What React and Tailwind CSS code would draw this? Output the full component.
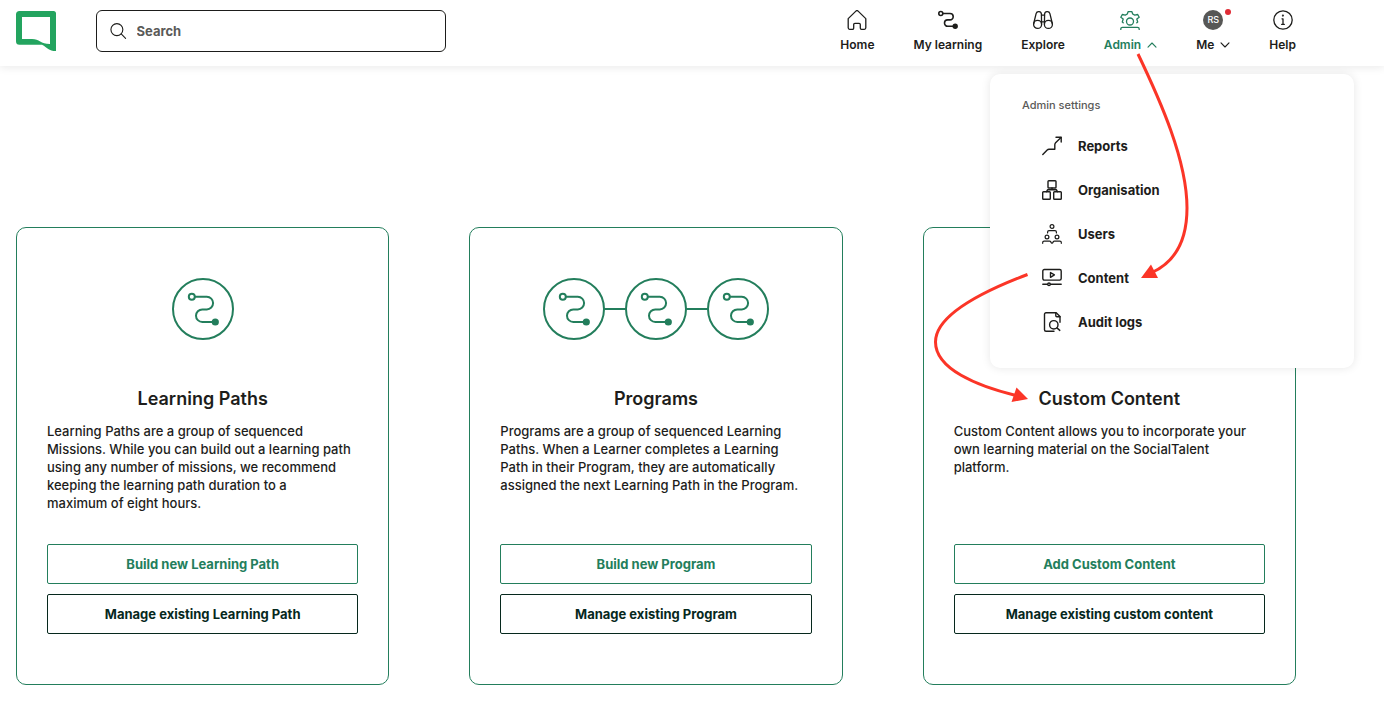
import { useState } from "react";

const iconProps = {
  fill: "none",
  stroke: "currentColor",
  strokeLinecap: "round",
  strokeLinejoin: "round",
  "aria-hidden": true,
};

function Logo() {
  return (
    <svg width="40" height="40" viewBox="0 0 40 40" aria-hidden="true">
      <path
        fill="#23a45f"
        fillRule="evenodd"
        d="M3.500 0H37.500A2.500 2.500 0 0 1 40 2.500V40C32.500 40 31.500 36.500 26 33.700H3.500A3.500 3.500 0 0 1 0 30.200V3.500A3.500 3.500 0 0 1 3.500 0ZM6 6V28H16C23.500 28 24.500 33 34 33V6Z"
      />
    </svg>
  );
}

function HomeIcon() {
  return (
    <svg width="20" height="20" viewBox="0 0 20 20" strokeWidth="1.300" {...iconProps}>
      <path d="M1.200 8.600 8.900 1.100a1.600 1.600 0 0 1 2.200 0L18.800 8.600V17.800a1.500 1.500 0 0 1-1.500 1.500H14.500a1.200 1.200 0 0 1-1.200-1.200V14.500a1.200 1.200 0 0 0-1.200-1.200H7.900A1.200 1.200 0 0 0 6.700 14.500v3.600a1.200 1.200 0 0 1-1.200 1.200H2.700A1.500 1.500 0 0 1 1.200 17.800Z" />
    </svg>
  );
}

function LearningIcon() {
  return (
    <svg width="20" height="20" viewBox="0 0 20 20" strokeWidth="1.600" {...iconProps}>
      <circle cx="2.800" cy="3.500" r="2" />
      <path d="M5 3.500h7a3.200 3.200 0 0 1 0 6.400H9.700a3.200 3.200 0 0 0 0 6.400H15" />
      <circle cx="17.200" cy="16.200" r="1.900" fill="currentColor" />
    </svg>
  );
}

function ExploreIcon() {
  return (
    <svg width="20" height="20" viewBox="0 0 20 20" strokeWidth="1.300" {...iconProps}>
      <circle cx="4.600" cy="14.400" r="4" />
      <circle cx="15.400" cy="14.400" r="4" />
      <path d="M.7 13.500 3.100 3.600a2.700 2.700 0 0 1 5.300.7L8.600 14" />
      <path d="M19.300 13.500 16.900 3.600a2.700 2.700 0 0 0-5.300.7L11.400 14" />
      <path d="M8.500 5.200h3M8.600 11.800h2.800" />
    </svg>
  );
}

function AdminIcon() {
  return (
    <svg width="20" height="20" viewBox="0 0 20 20" strokeWidth="1.300" {...iconProps}>
      <path d="M3.200 12.800 2.300 12l.9-3L.8 7.200 2.300 4.500l3 .6L7.300 4 8.200 1.600h3.600L12.700 4l2 1.100 3-.6 1.500 2.700L16.800 9l.9 3-.9.800" />
      <circle cx="10" cy="11.500" r="3.500" />
      <path d="M.8 19.400v-.4a1.700 1.700 0 0 1 1.700-1.700h15a1.700 1.700 0 0 1 1.700 1.700v.4" />
    </svg>
  );
}

function HelpIcon() {
  return (
    <svg width="20" height="20" viewBox="0 0 20 20" strokeWidth="1.300" {...iconProps}>
      <circle cx="10" cy="10" r="9.200" />
      <path d="M9 8.800h1v5.600M8.700 14.400h2.600" />
      <circle cx="9.900" cy="5.600" r=".4" fill="currentColor" />
    </svg>
  );
}

function Chevron({ up }) {
  return (
    <svg width="10" height="6" viewBox="0 0 10 6" strokeWidth="1.100" {...iconProps}>
      <path d={up ? "M1 5.200 5 1l4 4.200" : "M1 .8 5 5l4-4.200"} />
    </svg>
  );
}

function SearchIcon() {
  return (
    <svg width="18" height="18" viewBox="0 0 18 18" strokeWidth="1.200" {...iconProps}>
      <circle cx="7.500" cy="7.500" r="6.500" />
      <path d="m12.200 12.200 4.800 4.800" />
    </svg>
  );
}

function ReportsIcon() {
  return (
    <svg width="20" height="20" viewBox="0 0 20 20" strokeWidth="1.400" {...iconProps}>
      <path d="M.8 18.600 5.200 14a2.500 2.500 0 0 1 1.800-.8h5.800V8.700a3 3 0 0 1 .8-2L19 1.400" />
      <path d="M14 1.200h5.200V6" />
    </svg>
  );
}

function OrganisationIcon() {
  return (
    <svg width="20" height="20" viewBox="0 0 20 20" strokeWidth="1.400" {...iconProps}>
      <rect x="6" y=".7" width="8" height="7.300" rx=".8" />
      <rect x=".7" y="11.700" width="7.600" height="7.600" rx=".8" />
      <rect x="11.700" y="11.700" width="7.600" height="7.600" rx=".8" />
      <path d="M10 8v1.500M4.500 11.700l1.200-2h8.600l1.200 2" />
    </svg>
  );
}

function UsersIcon() {
  return (
    <svg width="20" height="20" viewBox="0 0 20 20" strokeWidth="1.200" {...iconProps}>
      <circle cx="10" cy="2.500" r="1.900" />
      <circle cx="5" cy="13" r="1.900" />
      <circle cx="15" cy="13" r="1.900" />
      <path d="M5.600 9V8a1.400 1.400 0 0 1 1.400-1.400h6A1.400 1.400 0 0 1 14.400 8v1" />
      <path d="M.7 19.300v-.8A1.400 1.400 0 0 1 2.100 17.100h5.500a1.400 1.400 0 0 1 1.400 1.400l1 .8 1-.8a1.400 1.400 0 0 1 1.400-1.400h5.500a1.400 1.400 0 0 1 1.400 1.400v.8" />
    </svg>
  );
}

function ContentIcon() {
  return (
    <svg width="20" height="20" viewBox="0 0 20 20" strokeWidth="1.400" {...iconProps}>
      <rect x=".8" y="1.500" width="18.400" height="10.600" rx="1.500" />
      <path d="M8.500 4.500v4.800l3.900-2.400Z" />
      <path d="M.8 16.300h4.700M8.500 16.300h10.700" />
      <circle cx="7" cy="16.300" r="1.300" />
    </svg>
  );
}

function AuditIcon() {
  return (
    <svg width="20" height="20" viewBox="0 0 20 20" strokeWidth="1.400" {...iconProps}>
      <path d="M12 19.300H4A1.500 1.500 0 0 1 2.500 17.800V2.200A1.500 1.500 0 0 1 4 .7h10.200l3.800 3.800v5.800" />
      <path d="M13.800.9v2.800a1 1 0 0 0 1 1H18" />
      <circle cx="11.800" cy="12.800" r="4.200" />
      <path d="m14.900 15.900 2.900 2.500" />
    </svg>
  );
}

// Circle with the route drawing, repeated and joined for programs
function PathBadge({ count = 1 }) {
  const width = 62 + (count - 1) * 82;
  return (
    <svg
      width={width}
      height="62"
      viewBox={`0 0 ${width} 62`}
      strokeWidth="2"
      className="text-[#237e5c]"
      {...iconProps}
    >
      {Array.from({ length: count }, (_, i) => (
        <g key={i} transform={`translate(${i * 82} 0)`}>
          {i > 0 && <path d="M-20 31H0" />}
          <circle cx="31" cy="31" r="30" />
          <circle cx="19.800" cy="18.800" r="3" />
          <path d="M23 18.800h11.800a6.300 6.300 0 0 1 0 12.600H30.300a6.300 6.300 0 0 0 0 12.600H43" />
          <circle cx="43.300" cy="44" r="2.600" fill="currentColor" />
        </g>
      ))}
    </svg>
  );
}

const adminLinks = [
  { label: "Reports", icon: ReportsIcon },
  { label: "Organisation", icon: OrganisationIcon },
  { label: "Users", icon: UsersIcon },
  { label: "Content", icon: ContentIcon },
  { label: "Audit logs", icon: AuditIcon },
];

const cards = [
  {
    title: "Learning Paths",
    text: "Learning Paths are a group of sequenced\nMissions. While you can build out a learning path\nusing any number of missions, we recommend\nkeeping the learning path duration to a\nmaximum of eight hours.",
    badges: 1,
    primary: "Build new Learning Path",
    secondary: "Manage existing Learning Path",
  },
  {
    title: "Programs",
    text: "Programs are a group of sequenced Learning\nPaths. When a Learner completes a Learning\nPath in their Program, they are automatically\nassigned the next Learning Path in the Program.",
    badges: 3,
    primary: "Build new Program",
    secondary: "Manage existing Program",
  },
  {
    title: "Custom Content",
    text: "Custom Content allows you to incorporate your\nown learning material on the SocialTalent\nplatform.",
    badges: 0,
    primary: "Add Custom Content",
    secondary: "Manage existing custom content",
  },
];

const navItem = "flex flex-col items-center gap-2 text-xs leading-[14px] font-semibold";

function Header({ menuOpen, onToggle }) {
  return (
    <header className="relative z-10 bg-white shadow-[0_2px_8px_rgba(0,0,0,0.08)]">
      <div className="flex h-[66px] max-w-[1312px] items-start justify-between px-4 pt-2.5">
        <div className="flex items-center gap-10">
          <a href="#" aria-label="Dashboard">
            <Logo />
          </a>
          <label className="flex h-[42px] w-[350px] items-center gap-2.5 rounded-md border border-[#1d1d1b] px-[13px]">
            <SearchIcon />
            <input
              type="search"
              aria-label="Search"
              placeholder="Search"
              className="w-full text-[13px] leading-5 font-bold outline-none placeholder:text-[#5a5a58]"
            />
          </label>
        </div>

        <nav className="flex gap-[39px]">
          <a href="#" className={navItem}>
            <HomeIcon />
            Home
          </a>
          <a href="#" className={navItem}>
            <LearningIcon />
            My learning
          </a>
          <a href="#" className={navItem}>
            <ExploreIcon />
            Explore
          </a>
          <button
            type="button"
            aria-expanded={menuOpen}
            onClick={onToggle}
            className={`${navItem} text-[#237e5c]`}
          >
            <AdminIcon />
            <span className="flex items-center gap-1.5">
              Admin <Chevron up={menuOpen} />
            </span>
          </button>
          <button type="button" className={navItem}>
            <span className="relative flex size-5 items-center justify-center rounded-full bg-[#575755] text-[9px] font-medium text-white">
              RS
              <span className="absolute -top-px -right-2 size-1.5 rounded-full bg-[#e02b35]" />
            </span>
            <span className="flex items-center gap-1.5">
              Me <Chevron />
            </span>
          </button>
          <a href="#" className={navItem}>
            <HelpIcon />
            Help
          </a>
        </nav>
      </div>

      {menuOpen && (
        <div className="absolute top-[74px] right-[30px] w-[364px] rounded-[10px] bg-white px-8 py-6 shadow-[0_0_10px_rgba(0,0,0,0.1)]">
          <p className="text-[11px] leading-[14px] font-medium text-[#5a5a58]">Admin settings</p>
          <ul className="mt-3 ml-5">
            {adminLinks.map(({ label, icon: Icon }) => (
              <li key={label}>
                <a href="#" className="flex h-11 items-center gap-4 text-[13px] leading-5 font-bold">
                  <Icon />
                  {label}
                </a>
              </li>
            ))}
          </ul>
        </div>
      )}
    </header>
  );
}

function ContentCard({ title, text, badges, primary, secondary }) {
  return (
    <section className="flex flex-col rounded-[10px] border border-[#237e5c] px-[30px] py-[50px]">
      <div className="flex h-[62px] justify-center">
        {badges > 0 && <PathBadge count={badges} />}
      </div>
      <h2 className="mt-12 text-center text-lg leading-[22px] font-semibold">{title}</h2>
      <p className="mt-3 mb-8 text-[13px] leading-[18px] font-medium whitespace-pre-line">{text}</p>
      <div className="mt-auto flex flex-col gap-2.5 text-[13px] leading-5 font-bold">
        <button type="button" className="h-10 rounded-xs border border-[#237e5c] text-[#237e5c]">
          {primary}
        </button>
        <button type="button" className="h-10 rounded-xs border border-[#06281d] text-[#06281d]">
          {secondary}
        </button>
      </div>
    </section>
  );
}

// Red guide arrows: Admin -> Content -> Custom Content
function GuideArrows() {
  return (
    <svg
      width="300"
      height="360"
      viewBox="910 50 300 360"
      className="pointer-events-none absolute top-[50px] left-[910px] z-20"
      fill="none"
      stroke="#fb3527"
      strokeWidth="3"
      aria-hidden="true"
    >
      <path d="M1138 54C1160 100 1187 160 1187 208C1187 240 1175 262 1152 272.500" />
      <path d="M1141 278 1151 264.500 1158 278Z" fill="#fb3527" stroke="none" />
      <path d="M1027.500 274.500C984 291 935.500 315 935.500 342C935.500 369 977 386 1016 395.500" />
      <path d="M1028 399 1016.500 387.500 1011.500 402Z" fill="#fb3527" stroke="none" />
    </svg>
  );
}

export default function App() {
  const [menuOpen, setMenuOpen] = useState(true);

  return (
    <div className="relative min-h-screen overflow-x-hidden bg-white font-['Inter','Liberation_Sans',sans-serif] text-[#1d1d1b]">
      <Header menuOpen={menuOpen} onToggle={() => setMenuOpen(!menuOpen)} />
      <main className="grid max-w-[1312px] grid-cols-3 gap-20 px-4 pt-[161px] pb-10">
        {cards.map((card) => (
          <ContentCard key={card.title} {...card} />
        ))}
      </main>
      {menuOpen && <GuideArrows />}
    </div>
  );
}
